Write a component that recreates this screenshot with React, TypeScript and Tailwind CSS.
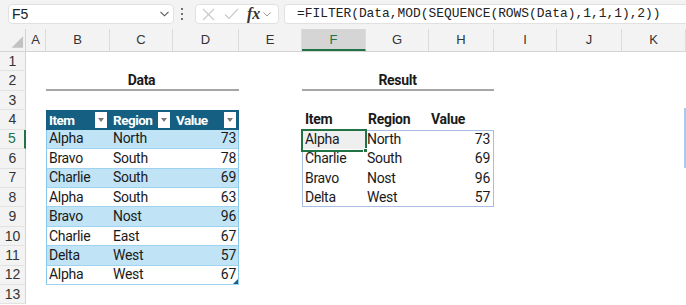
import React from "react";

const COLS = [
  { k: "A", w: "w-[20px]" },
  { k: "B", w: "w-[64px]" },
  { k: "C", w: "w-[63px]" },
  { k: "D", w: "w-[66px]" },
  { k: "E", w: "w-[63px]" },
  { k: "F", w: "w-[64px]" },
  { k: "G", w: "w-[63px]" },
  { k: "H", w: "w-[65px]" },
  { k: "I", w: "w-[63px]" },
  { k: "J", w: "w-[65px]" },
  { k: "K", w: "w-[64px]" },
];

const data: [string, string, number][] = [
  ["Alpha", "North", 73],
  ["Bravo", "South", 78],
  ["Charlie", "South", 69],
  ["Alpha", "South", 63],
  ["Bravo", "Nost", 96],
  ["Charlie", "East", 67],
  ["Delta", "West", 57],
  ["Alpha", "West", 67],
];

const result: [string, string, number][] = [
  ["Alpha", "North", 73],
  ["Charlie", "South", 69],
  ["Bravo", "Nost", 96],
  ["Delta", "West", 57],
];

const cellFont = "font-['Roboto',sans-serif] text-[14px] tracking-[-0.3px] text-[#1a1a1a]";

function Filter() {
  return (
    <span className="ml-auto mr-[3px] flex h-[16px] w-[12px] shrink-0 items-center justify-center bg-white">
      <svg width="6" height="4" viewBox="0 0 6 4">
        <polygon points="0,0 6,0 3,4" fill="#7a7a7a" />
      </svg>
    </span>
  );
}

function RowHeader({ n, active }: { n: number; active?: boolean }) {
  return (
    <div
      className={
        "flex h-full w-[26px] shrink-0 items-center justify-center border-b border-[#e2e2e2] bg-[#f3f3f3] font-['Liberation_Sans',sans-serif] text-[14px] tracking-normal " +
        (active ? "border-r-2 border-r-[#217346] text-[#217346]" : "border-r border-r-[#d4d4d4] text-[#333]")
      }
    >
      {n}
    </div>
  );
}

export default function App() {
  const rows: React.ReactNode[] = [];
  for (let r = 1; r <= 13; r++) {
    let B: React.ReactNode = null;
    let C: React.ReactNode = null;
    let D: React.ReactNode = null;
    let F: React.ReactNode = null;
    let G: React.ReactNode = null;
    let H: React.ReactNode = null;
    let bcls = "";
    let ccls = "";
    let dcls = "";
    let fcls = "";
    let gcls = "";
    let hcls = "";

    if (r === 2) {
      bcls = ccls = dcls = "border-b-2 border-b-[#a6a6a6]";
      fcls = gcls = hcls = "border-b-2 border-b-[#a6a6a6]";
    }
    if (r === 4) {
      const hd = "bg-[#156082] text-white font-bold text-[13.5px] tracking-[-0.5px]";
      bcls = hd;
      ccls = hd;
      dcls = hd;
      B = (<><span className="pl-[3px]">Item</span><Filter /></>);
      C = (<><span className="pl-[3px]">Region</span><Filter /></>);
      D = (<><span className="pl-[3px]">Value</span><Filter /></>);
      F = <span className="pl-[3px] font-bold">Item</span>;
      G = <span className="pl-[2px] font-bold">Region</span>;
      H = <span className="pl-[2px] font-bold">Value</span>;
    }
    if (r >= 5 && r <= 12) {
      const d = data[r - 5];
      const band = r % 2 === 1 ? "bg-[#c0e4f5]" : "bg-white";
      const bb = "border-b border-b-[#9fd2ee]";
      bcls = band + " " + bb + " border-l border-l-[#86c9ea]";
      ccls = band + " " + bb;
      dcls = band + " " + bb + " border-r border-r-[#86c9ea] relative";
      B = <span className="pl-[2px]">{d[0]}</span>;
      C = <span className="pl-[3px]">{d[1]}</span>;
      D = (
        <>
          <span className="ml-auto pr-[2px]">{d[2]}</span>
          {r === 12 && (
            <svg className="absolute bottom-0 right-0" width="5" height="5" viewBox="0 0 5 5">
              <polygon points="5,0 5,5 0,5" fill="#1f5a8c" />
            </svg>
          )}
        </>
      );
    }
    if (r >= 5 && r <= 8) {
      const d = result[r - 5];
      const sb = "border-[#a9bde2]";
      fcls = "border-l " + sb + (r === 5 ? " border-t relative bg-[#efefef]" : "") + (r === 8 ? " border-b" : "");
      gcls = (r === 5 ? "border-t " : "") + (r === 8 ? "border-b " : "") + sb;
      hcls = "border-r " + sb + (r === 5 ? " border-t" : "") + (r === 8 ? " border-b" : "");
      F = (
        <>
          <span className="pl-[2px]">{d[0]}</span>
          {r === 5 && (
            <div className="absolute -left-[2px] -top-[2px] h-[23px] w-[66px] border-2 border-[#217346]">
              <div className="absolute -bottom-[3px] -right-[3px] h-[5px] w-[5px] border border-white bg-[#217346]" />
            </div>
          )}
        </>
      );
      G = <span className="pl-[1px]">{d[1]}</span>;
      H = <span className="ml-auto pr-[3px]">{d[2]}</span>;
    }

    const content: Record<string, React.ReactNode> = { B, C, D, F, G, H };
    const cls: Record<string, string> = { B: bcls, C: ccls, D: dcls, F: fcls, G: gcls, H: hcls };

    rows.push(
      <div key={r} className="flex h-[19.43px]">
        <RowHeader n={r} active={r === 5} />
        {COLS.map((c) => (
          <div
            key={c.k}
            className={"flex h-full shrink-0 items-center overflow-visible whitespace-nowrap " + c.w + " " + (cls[c.k] || "")}
          >
            {r === 2 && c.k === "C" ? (
              <span className="w-full text-center font-bold">Data</span>
            ) : r === 2 && c.k === "G" ? (
              <span className="w-full text-center font-bold">Result</span>
            ) : (
              content[c.k]
            )}
          </div>
        ))}
      </div>
    );
  }

  return (
    <div className="relative h-[305px] w-[686px] overflow-hidden bg-white">
      {/* Formula bar */}
      <div className="flex h-[29px] items-center bg-[#f3f3f3] pb-[1px]">
        <div className="ml-[8px] flex h-[20px] w-[166px] items-center rounded-[4px] border border-[#e1e1e1] bg-white pl-[3px] pr-[4px] font-['Liberation_Sans',sans-serif] text-[14px] text-[#222]">
          <span>F5</span>
          <svg className="ml-auto" width="9" height="6" viewBox="0 0 9 6">
            <path d="M0.5 0.8 L4.5 4.8 L8.5 0.8" fill="none" stroke="#555" strokeWidth="1.1" />
          </svg>
        </div>
        <div className="ml-[7px] flex h-[12px] w-[2px] flex-col justify-between">
          <span className="h-[2px] w-[2px] rounded-full bg-[#444]" />
          <span className="h-[2px] w-[2px] rounded-full bg-[#444]" />
          <span className="h-[2px] w-[2px] rounded-full bg-[#444]" />
        </div>
        <div className="ml-[12px] flex h-[20px] w-[84px] items-center rounded-[4px] border border-[#e1e1e1] bg-white">
          <svg className="ml-[6px]" width="13" height="13" viewBox="0 0 13 13">
            <path d="M1 1 L12 12 M12 1 L1 12" stroke="#c8c8c8" strokeWidth="1.1" />
          </svg>
          <svg className="ml-[9px]" width="15" height="12" viewBox="0 0 15 12">
            <path d="M1 6.5 L5 10.5 L14 1" fill="none" stroke="#c8c8c8" strokeWidth="1.1" />
          </svg>
          <span className="ml-[8px] font-['Liberation_Serif',serif] text-[16px] font-bold italic leading-none text-[#333]">fx</span>
          <svg className="ml-[3px]" width="8" height="5" viewBox="0 0 8 5">
            <path d="M0.5 0.5 L4 4 L7.5 0.5" fill="none" stroke="#999" strokeWidth="1" />
          </svg>
        </div>
        <div className="ml-[5px] flex h-[20px] flex-1 items-center rounded-l-[4px] border border-r-0 border-[#e1e1e1] bg-white pl-[12px] font-['Liberation_Mono',monospace] text-[12.9px] text-[#222]">
          =FILTER(Data,MOD(SEQUENCE(ROWS(Data),1,1,1),2))
        </div>
      </div>

      {/* Column headers */}
      <div className="flex h-[23px] border-b border-[#d4d4d4] bg-[#f3f3f3]">
        <div className="flex h-full w-[26px] shrink-0 border-r border-[#d4d4d4]">
          <svg width="26" height="22" viewBox="0 0 26 22">
            <polygon points="24,7 24,19 12,19" fill="#c2c2c2" />
          </svg>
        </div>
        {COLS.map((c) => (
          <div
            key={c.k}
            className={
              "flex h-full shrink-0 items-center justify-center border-r border-r-[#dcdcdc] font-['Liberation_Sans',sans-serif] text-[13px] " +
              c.w +
              (c.k === "F" ? " border-b-2 border-b-[#217346] bg-[#d5d5d5] pt-[2px] text-[#217346]" : " text-[#333]")
            }
          >
            {c.k}
          </div>
        ))}
      </div>

      {/* Grid */}
      <div className={cellFont}>{rows}</div>

      {/* scrollbar hint */}
      <div className="absolute right-0 top-[108px] h-[60px] w-[2px] bg-[#9fd0ef]" />
    </div>
  );
}
